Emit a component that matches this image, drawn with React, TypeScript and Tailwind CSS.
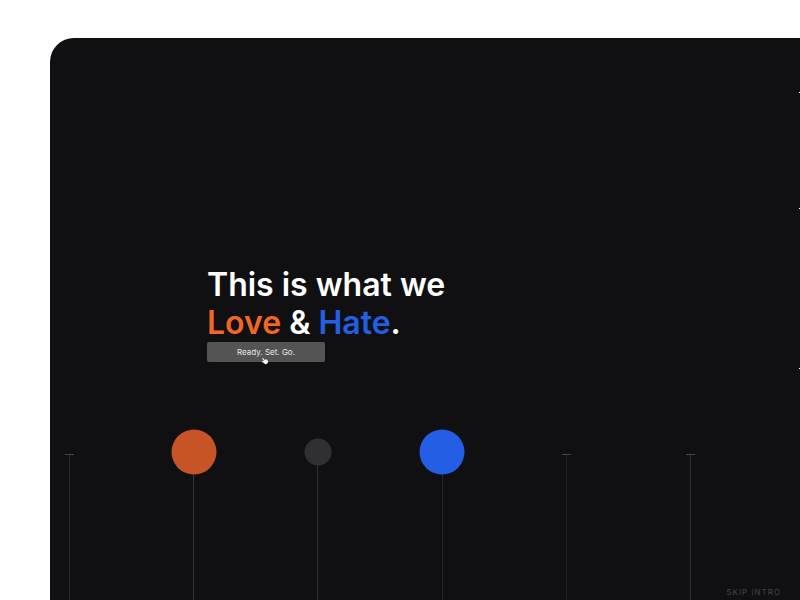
const markers = [
  { id: 'a', dot: '', line: 'bg-[#2a2a2b]' },
  { id: 'love', dot: 'size-[45px] bg-[#c75426]', line: 'bg-[#363637]' },
  { id: 'neutral', dot: 'size-[27px] bg-[#303033]', line: 'bg-[#303031]' },
  { id: 'hate', dot: 'size-[45px] bg-[#235ee4]', line: 'bg-[#242425]' },
  { id: 'b', dot: '', line: 'bg-[#222223]' },
  { id: 'c', dot: '', line: 'bg-[#303031]' },
];

function Marker({ dot, line }: { dot: string; line: string }) {
  return (
    <div className="relative flex w-[9px] flex-col items-center">
      <div className="h-px w-full bg-[#454546]" />
      <div className={`w-px flex-1 ${line}`} />
      {dot && (
        <div className={`absolute top-[-2px] left-1/2 -translate-x-1/2 -translate-y-1/2 rounded-full ${dot}`} />
      )}
    </div>
  );
}

function HandCursor() {
  return (
    <svg className="pointer-events-none absolute top-[15px] left-[54px]" width="8" height="9" viewBox="0 0 8 9" aria-hidden="true">
      <path
        d="M1 1.2 2 .6l1.5 2.1.4-.8 1 .4.5-.3.7.7.7.2.5 2-.8 1.6-2 1L3 6.3.4 4.8l.4-.9 1.6.2Z"
        fill="#fff"
        stroke="#222"
        strokeWidth=".35"
      />
    </svg>
  );
}

export default function App() {
  return (
    <div className="flex min-h-screen flex-col bg-white pt-[38px] pl-[50px] font-['Inter',sans-serif]">
      <main className="relative flex flex-1 flex-col overflow-hidden rounded-tl-3xl bg-[#101012] text-white">
        <section className="flex flex-col items-start pt-[228px] pl-[157px]">
          <h1 className="text-[32px] leading-[38px] font-semibold whitespace-nowrap">
            This is what we
            <br />
            <span className="text-[#f26522]">Love</span> &amp; <span className="text-[#235ee4]">Hate</span>.
          </h1>
          <button type="button" className="relative h-5 w-[118px] cursor-pointer rounded-[2px] bg-[#545455] text-[8px] leading-5 text-[#e8e8e8]">
            Ready. Set. Go.
            <HandCursor />
          </button>
        </section>

        <div className="mt-[92px] flex flex-1 justify-between pr-[105px] pl-[15px]">
          {markers.map((m) => (
            <Marker key={m.id} dot={m.dot} line={m.line} />
          ))}
        </div>

        <div aria-hidden="true">
          <span className="absolute top-[54px] right-0 size-px bg-white" />
          <span className="absolute top-[170px] right-0 size-px bg-white" />
          <span className="absolute top-[330px] right-0 size-px bg-white" />
        </div>

        <button type="button" className="absolute right-[19px] bottom-[3px] cursor-pointer text-[8px] leading-[10px] tracking-[1px] text-[#454546]">
          SKIP INTRO
        </button>
      </main>
    </div>
  );
}
